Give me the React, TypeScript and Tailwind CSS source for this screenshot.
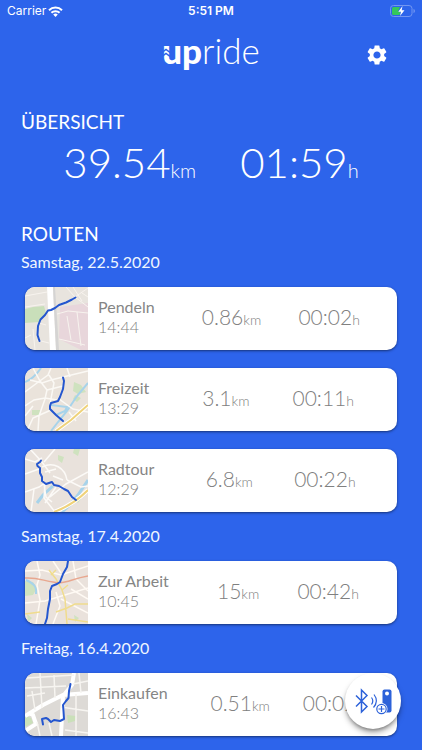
import React from 'react';
import { MdSettings } from 'react-icons/md';

interface Route {
  id: string;
  name: string;
  time: string;
  distance: string;
  duration: string;
  map: React.ReactNode;
}

interface Day {
  label: string;
  routes: Route[];
}

const MapFrame: React.FC<{ bg: string; track: string; children: React.ReactNode }> = ({ bg, track, children }) => (
  <svg viewBox="0 0 63 63" className="h-full w-full" fill="none" aria-hidden="true">
    <rect width="63" height="63" fill={bg} />
    {children}
    <path d={track} stroke="#2456cf" strokeWidth="2" strokeLinecap="round" strokeLinejoin="round" />
  </svg>
);

const PendelnMap = () => (
  <MapFrame bg="#e8e4de" track="M50.500 10.500 47 12.500 41 15.500 34 18 30 21 26 23 23 23.500 20 28 15.500 32.500 13 39 12.500 48 14.500 54">
    <path d="M0 22 8 20 19 19 21 26 14 35 0 36Z" fill="#c9dfba" />
    <path d="M35 20 63 16V63H56L34 52Z" fill="#e8d6db" />
    <path d="M22 0H28L31 63H25Z" fill="#fff" />
    <path d="M28 0H30L34 63H31Z" fill="#d5d4d3" />
    <path d="M0 9 22 5M0 20 20 17M6 48 0 51M8 42 10 63M12 53 24 56M14 36 21 38M32 27 43 24 63 26M34 52 60 58M52 25 56 59M41 0 50 10 63 20M35 18 50 10 63 1M48 0 57 14M57 6 63 10M42 29 46 53" stroke="#f7f3ee" />
  </MapFrame>
);

const FreizeitMap = () => (
  <MapFrame bg="#eae3db" track="M38 9.500 39 13 38 21 35 29 33 33 26 35 25 38 25 41 31 47 38 53">
    <path d="M49 14 56 17 61 24 53 26 48 23ZM7 42H15V47H7ZM50 27 56 30 52 34 48 31Z" fill="#cfe2bf" />
    <path d="M0 14C8 11 12 6 16 0M63 15 52 28 42 43 33 54 26 63M26 37 42 39 40 43 31 47" stroke="#a7d3ea" strokeWidth="2" />
    <path d="M0 24 12 15 23 7 26 0M8 0 15 13 22 22 20 31 14 48 13 63M5 12 17 15 26 12 38 9 63 3M0 38 9 32 20 30 32 32M0 48 8 38M25 36 29 15 24 7M22 22 38 18M42 0 45 9M2 63 8 50 17 46 26 42M34 31 48 41 63 44M44 44 51 53" stroke="#fbf9f5" strokeWidth="1.500" />
    <path d="M31 63 46 52 63 37" stroke="#fff" strokeWidth="4" />
    <path d="M31 63 46 52 63 37" stroke="#efd27a" strokeWidth="2" />
  </MapFrame>
);

const RadtourMap = () => (
  <MapFrame bg="#e9e2dc" track="M16 11.500 15 13 12 15 12.500 17 15 19 15 24 17 28 17 32 21 35 27 33 29 36 34 37 39 40 43 42 47 48 51 51">
    <path d="M33 6 39 8 37 14 33 11ZM49 0H55L53 7 48 4ZM50 47 56 50 53 54 49 51Z" fill="#cfe2bf" />
    <path d="M63 31 53 46 45 56 37 63M12 54 18 46 28 37" stroke="#a7d3ea" strokeWidth="3" />
    <path d="M5 0 17 13 25 24M17 18C29 12 40 19 42 31M19 35 21 48 27 53M25 48 41 35 63 23M30 63 19 49 20 35M19 13 30 0M0 25 14 20M0 43 14 38 20 34M20 54 31 38M0 10 10 13 17 9M42 31 56 38 63 37M20 23 31 20M28 27 38 31M9 40 6 63" stroke="#fcfaf7" strokeWidth="1.500" />
    <path d="M29 63C43 58 52 52 63 41" stroke="#fff" strokeWidth="4" />
    <path d="M29 63C43 58 52 52 63 41" stroke="#efd27a" strokeWidth="2" />
  </MapFrame>
);

const ArbeitMap = () => (
  <MapFrame bg="#eae2dc" track="M43 0 42 6 38 13 35 21 32 23 27 25 25 30 25 38 23 48 22 57 20 63">
    <path d="M0 20 8 21 12 27 8 34 0 35ZM49 54 54 57 50 61ZM2 53 7 57 3 61Z" fill="#cfe2bf" />
    <path d="M1 19C8 22 12 25 11 33" stroke="#a7d3ea" strokeWidth="2" />
    <path d="M12 0 15 14 12 24 15 39 11 63M0 10 17 9 36 14 63 5M0 42 20 40 63 27M28 63 35 45 31 31M48 0 51 18 63 30M28 0 36 12M36 38 63 52M46 28 63 38" stroke="#fffaf4" strokeWidth="1.500" />
    <path d="M24 9 31 18 37 29 40 38 42 63M31 51 42 47 50 43 63 43M0 53 15 51M26 14 31 9M37 29 43 24M43 58 63 61" stroke="#f0dc8d" strokeWidth="1.500" />
    <path d="M0 17C12 16 19 20 28 21C39 24 45 18 63 15" stroke="#e8a78f" strokeWidth="1.500" />
  </MapFrame>
);

const EinkaufenMap = () => (
  <MapFrame bg="#dddad6" track="M45.500 11 44 18 43.500 25 41 28 38 32 38.500 38 39 46 35 48 29 47 26 49 23 46 21 45 17 46 18 51.500">
    <path d="M42 42 51 43 50 48 43 50ZM0 42 6 45 8 50 0 54Z" fill="#cae0b9" />
    <path d="M49 0 47 12 38 23 36 63M0 43 18 32 38 22 63 20M0 58 11 51 8 42 3 40" stroke="#fff" strokeWidth="4" />
    <path d="M2 5 49 2M0 15 41 13M15 0 17 35M29 2 30 25M2 23 20 20M7 18 10 37M36 34 63 38M51 21 51 63M40 57 63 60M12 49 15 63M24 50 27 63M54 0 56 20M48 11 63 8" stroke="#f7f5f1" strokeWidth="1.500" />
  </MapFrame>
);

const DAYS: Day[] = [
  {
    label: 'Samstag, 22.5.2020',
    routes: [
      { id: 'pendeln', name: 'Pendeln', time: '14:44', distance: '0.86', duration: '00:02', map: <PendelnMap /> },
      { id: 'freizeit', name: 'Freizeit', time: '13:29', distance: '3.1', duration: '00:11', map: <FreizeitMap /> },
      { id: 'radtour', name: 'Radtour', time: '12:29', distance: '6.8', duration: '00:22', map: <RadtourMap /> },
    ],
  },
  {
    label: 'Samstag, 17.4.2020',
    routes: [
      { id: 'arbeit', name: 'Zur Arbeit', time: '10:45', distance: '15', duration: '00:42', map: <ArbeitMap /> },
    ],
  },
  {
    label: 'Freitag, 16.4.2020',
    routes: [
      { id: 'einkaufen', name: 'Einkaufen', time: '16:43', distance: '0.51', duration: '00:02', map: <EinkaufenMap /> },
    ],
  },
];

const StatusBar = () => (
  <div className="grid h-[22px] grid-cols-3 items-center px-[7px] font-['Inter',sans-serif] text-[12px] leading-4">
    <div className="flex items-center gap-[2px]">
      <span className="text-[12px]">Carrier</span>
      <svg viewBox="0 0 15 11" className="h-[11px] w-[15px]" aria-hidden="true">
        <path d="M7.500 11 5.200 8.600a3.300 3.300 0 0 1 4.600 0Z" fill="#fff" />
        <path d="M3.400 6.800a5.900 5.900 0 0 1 8.200 0M1 4.200a9.300 9.300 0 0 1 13 0" fill="none" stroke="#fff" strokeWidth="2" />
      </svg>
    </div>
    <span className="text-center font-semibold">5:51 PM</span>
    <svg viewBox="0 0 25 12" className="h-3 w-[25px] justify-self-end" fill="none" aria-hidden="true">
      <rect x="0.500" y="0.500" width="21.500" height="11" rx="3" stroke="#7396f1" />
      <path d="M23.500 4v4c1-.3 1.400-1 1.400-2s-.4-1.700-1.400-2Z" fill="#7396f1" />
      <path d="M3.500 2H10L8 6.500H10.500L9.500 10H3.500A1.500 1.500 0 0 1 2 8.500V3.500A1.500 1.500 0 0 1 3.500 2Z" fill="#35c75a" />
      <path d="M12.500 1 8.300 6.700H11L10 11 14.500 5.200H11.700Z" fill="#fff" />
    </svg>
  </div>
);

const Logo = () => (
  <div className="relative flex items-baseline text-[35px] leading-10">
    <span className="font-black">up</span>
    <span className="font-light">ride</span>
    <svg viewBox="0 0 8 12" className="absolute top-4 left-0 h-3 w-2" fill="none" aria-hidden="true">
      <path d="M0 6.500 4 3.500 8 6.500M0 10.500 4 7.500 8 10.500" stroke="#2d64eb" strokeWidth="1.500" />
    </svg>
  </div>
);

const RouteCard: React.FC<{ route: Route }> = ({ route }) => (
  <li className="flex h-[63px] overflow-hidden rounded-[10px] bg-white shadow-sm shadow-black/40">
    <div className="w-[63px] shrink-0">{route.map}</div>
    <div className="flex shrink-0 flex-col justify-center px-[10px] pb-1">
      <h3 className="text-[16px] leading-5 text-[#858585]">{route.name}</h3>
      <p className="text-[16px] leading-5 font-light text-[#808080]">{route.time}</p>
    </div>
    <div className="flex flex-1 items-center justify-evenly font-light text-[#808080]">
      <p className="text-[21px] leading-6">{route.distance}<span className="text-[14px]">km</span></p>
      <p className="text-[21px] leading-6">{route.duration}<span className="text-[14px]">h</span></p>
    </div>
  </li>
);

const AddDeviceButton = () => (
  <button
    type="button"
    aria-label="Gerät verbinden"
    className="fixed right-[21px] bottom-[21px] flex h-14 w-14 items-center justify-center rounded-full bg-white shadow-md shadow-black/40"
  >
    <svg viewBox="0 0 40 28" className="h-7 w-10" fill="none" stroke="#2d62d9" aria-hidden="true">
      <path d="M3 8.500 14 19.500 8.500 25V3L14 8.500 3 19.500" strokeWidth="1.500" />
      <path d="M18.500 10.500q2.600 3.500 0 7M21 7.500q5 6.500-.5 13" strokeWidth="1.200" />
      <rect x="29.500" y="2.500" width="9" height="23" rx="2" fill="#2d62d9" stroke="none" />
      <circle cx="34" cy="6.500" r="2" fill="#fff" stroke="none" />
      <circle cx="28.500" cy="22" r="6" fill="#fff" stroke="none" />
      <circle cx="28.500" cy="22" r="4.700" strokeWidth="1.200" />
      <path d="M25.500 22h6M28.500 19v6" strokeWidth="1.200" />
    </svg>
  </button>
);

const App: React.FC = () => {
  return (
    <div className="min-h-screen bg-[#2d64eb] pb-[13px] font-['Lato',sans-serif] text-white">
      <StatusBar />
      <header className="grid h-[66px] grid-cols-3 items-center px-[33px]">
        <h1 className="col-start-2 justify-self-center pb-[10px]" aria-label="upride"><Logo /></h1>
        <button type="button" aria-label="Einstellungen" className="justify-self-end">
          <MdSettings size={24} />
        </button>
      </header>

      <main>
        <section className="px-[21px] pt-[22px]">
          <h2 className="text-[19px] leading-6">ÜBERSICHT</h2>
          <div className="flex justify-center gap-11 pt-1 font-light">
            <p className="text-[42px] leading-12">39.54<span className="text-[20px]">km</span></p>
            <p className="text-[42px] leading-12">01:59<span className="text-[20px]">h</span></p>
          </div>
        </section>

        <section className="pt-7">
          <h2 className="px-[21px] pb-[6px] text-[19px] leading-6">ROUTEN</h2>
          <div className="flex flex-col gap-[14px]">
            {DAYS.map((day) => (
              <div key={day.label}>
                <h3 className="px-[21px] text-[16px] leading-5 text-blue-50">{day.label}</h3>
                <ul className="flex flex-col gap-[18px] px-[25px] pt-[15px]">
                  {day.routes.map((route) => (
                    <RouteCard key={route.id} route={route} />
                  ))}
                </ul>
              </div>
            ))}
          </div>
        </section>
      </main>

      <AddDeviceButton />
    </div>
  );
};

export default App;
